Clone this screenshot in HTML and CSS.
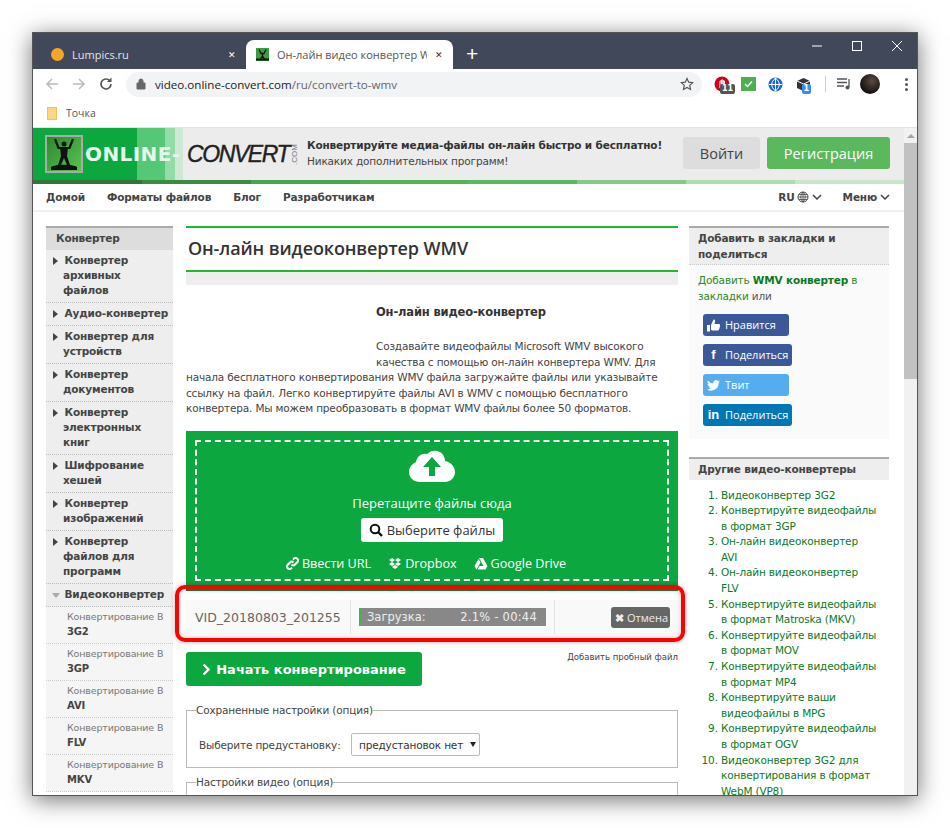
FILE: index.html
```html
<!DOCTYPE html>
<html lang="ru">
<head>
  <meta charset="UTF-8" />
  <title>Он-лайн видеоконвертер WMV</title>
  <link rel="stylesheet" href="styles.css">
</head>
<body>
  <div class="window">
    <div class="tabstrip">
      <div class="tab">
        <span class="dot"></span>
        <span class="tab-title">Lumpics.ru</span>
        <span class="tab-x light">✕</span>
      </div>
      <div class="tab active">
        <span class="favicon">
          <svg width="13" height="13" viewBox="0 0 13 13"><rect width="13" height="13" fill="#3b9e3f"/><path d="M3 1.500l2 4h3l2-4M6.500 5v3M6.500 8l-2 3M6.500 8l2 3" stroke="#111" stroke-width="1.300" fill="none"/><path d="M0 11.500h13" stroke="#111" stroke-width="2"/></svg>
        </span>
        <span class="tab-title">Он-лайн видео конвертер WMV</span>
        <span class="tab-x">✕</span>
      </div>
      <span class="newtab">+</span>
      <div class="winctl">
        <svg width="12" height="12" viewBox="0 0 12 12"><path d="M1 6h10" stroke="#fff" fill="none"/></svg>
        <svg width="12" height="12" viewBox="0 0 12 12"><rect x="1.500" y="1.500" width="9" height="9" stroke="#fff" fill="none"/></svg>
        <svg width="12" height="12" viewBox="0 0 12 12"><path d="M1 1l10 10M11 1L1 11" stroke="#fff" fill="none"/></svg>
      </div>
    </div>

    <div class="toolbar">
      <svg class="navicon" width="16" height="16" viewBox="0 0 16 16"><path d="M14 8H3M8 3L3 8l5 5" stroke="#bbb" stroke-width="1.500" fill="none"/></svg>
      <svg class="navicon" width="16" height="16" viewBox="0 0 16 16"><path d="M2 8h11M8 3l5 5-5 5" stroke="#bbb" stroke-width="1.500" fill="none"/></svg>
      <svg class="navicon" width="16" height="16" viewBox="0 0 16 16"><path d="M13 8a5 5 0 1 1-1.500-3.600" stroke="#555" stroke-width="1.600" fill="none"/><path d="M13.500 1.500v4.500h-4.500z" fill="#555"/></svg>
      <div class="omnibox">
        <svg width="10" height="12" viewBox="0 0 10 12"><path d="M1 5h8v6H1zM3 5V3a2 2 0 0 1 4 0v2" fill="#666" stroke="#666"/></svg>
        <span class="url">video.online-convert.com<span class="url-path">/ru/convert-to-wmv</span></span>
        <svg class="star" width="14" height="14" viewBox="0 0 14 14"><path d="M7 1.500l1.700 3.700 4 .5-3 2.700.8 4L7 10.400l-3.500 2 .8-4-3-2.700 4-.5z" stroke="#555" stroke-width="1.200" fill="none"/></svg>
      </div>
      <div class="extensions">
        <span class="ext">
          <svg width="16" height="16" viewBox="0 0 16 16"><circle cx="8" cy="8" r="7.500" fill="#d0021b"/><path d="M6 12V5h1.500v3M7.500 8V4H9v4M9 8V5h1.500v6" stroke="#fff" fill="none"/></svg>
          <span class="badge gray">11</span>
        </span>
        <span class="ext"><svg width="15" height="14" viewBox="0 0 15 14"><rect width="15" height="14" fill="#4caf50"/><path d="M4 7l2.500 2.500L11 4.500" stroke="#fff" stroke-width="1.500" fill="none"/></svg></span>
        <span class="ext"><svg width="15" height="15" viewBox="0 0 15 15"><circle cx="7.500" cy="7.500" r="7" fill="#1a66c9"/><path d="M7.500 1v13M1 7.500h13M7.500 1c-5 4-5 9 0 13M7.500 1c5 4 5 9 0 13" stroke="#fff" fill="none"/></svg></span>
        <span class="ext">
          <svg width="15" height="15" viewBox="0 0 15 15"><path d="M7.500 1L14 4v7l-6.500 3L1 11V4z" fill="#333"/><path d="M1 4l6.500 3L14 4M7.500 7v7" stroke="#fff" fill="none"/></svg>
          <span class="badge blue">1</span>
        </span>
        <span class="sep"></span>
        <svg class="queue" width="15" height="12" viewBox="0 0 15 12"><path d="M0 1h10M0 4.500h10M0 8h7M12 1v8" stroke="#555" stroke-width="1.300" fill="none"/><circle cx="10.500" cy="9.500" r="2" fill="#555"/></svg>
        <span class="avatar"></span>
        <span class="dots"><i></i><i></i><i></i></span>
      </div>
    </div>

    <div class="bookmarks">
      <span class="folder"></span>
      <span>Точка</span>
    </div>

    <div class="viewport">
      <div class="page">
        <div class="banner">
          <div class="logo">
            <div class="logo-box">
              <svg width="34" height="34" viewBox="0 0 34 34"><circle cx="17" cy="7" r="2.500" fill="#111"/><path d="M8 2l3.500 9h11L26 2" stroke="#111" stroke-width="2.200" fill="none"/><path d="M13 10h8l-1 9 3 9h-3l-3-7-3 7h-3l3-9z" fill="#111"/><path d="M4 30c4-3 22-3 26 0v3H4z" fill="#111"/></svg>
            </div>
            <span class="logo-online">ONLINE-</span>
            <span class="logo-convert">CONVERT</span>
            <span class="logo-com">.COM</span>
          </div>
          <div class="tagline">
            <b>Конвертируйте медиа-файлы он-лайн быстро и бесплатно!</b>
            <span>Никаких дополнительных программ!</span>
          </div>
          <a class="btn-login">Войти</a>
          <a class="btn-register">Регистрация</a>
        </div>
        <div class="stripes"></div>

        <nav class="topnav">
          <a>Домой</a>
          <a>Форматы файлов</a>
          <a>Блог</a>
          <a>Разработчикам</a>
          <span class="spacer"></span>
          <a class="lang">RU
            <svg width="12" height="12" viewBox="0 0 12 12"><circle cx="6" cy="6" r="5" stroke="#444" fill="none"/><path d="M1 6h10M6 1v10M2 3.500h8M2 8.500h8M6 1C3 4 3 8 6 11M6 1c3 3 3 7 0 10" stroke="#444" stroke-width=".8" fill="none"/></svg>
            <svg width="10" height="6" viewBox="0 0 10 6"><path d="M1 1l4 4 4-4" stroke="#444" stroke-width="1.500" fill="none"/></svg>
          </a>
          <a class="menu">Меню
            <svg width="10" height="6" viewBox="0 0 10 6"><path d="M1 1l4 4 4-4" stroke="#444" stroke-width="1.500" fill="none"/></svg>
          </a>
        </nav>

        <div class="columns">
          <aside class="sidebar">
            <div class="side-title">Конвертер</div>
            <ul class="side-list">
              <li>Конвертер архивных файлов</li>
              <li>Аудио-конвертер</li>
              <li>Конвертер для устройств</li>
              <li>Конвертер документов</li>
              <li>Конвертер электронных книг</li>
              <li>Шифрование хешей</li>
              <li>Конвертер изображений</li>
              <li>Конвертер файлов для программ</li>
              <li class="open">Видеоконвертер</li>
            </ul>
            <ul class="side-sub">
              <li>Конвертирование В <b>3G2</b></li>
              <li>Конвертирование В <b>3GP</b></li>
              <li>Конвертирование В <b>AVI</b></li>
              <li>Конвертирование В <b>FLV</b></li>
              <li>Конвертирование В <b>MKV</b></li>
            </ul>
          </aside>

          <main class="content">
            <h1>Он-лайн видеоконвертер WMV</h1>
            <div class="grey-bar"></div>
            <div class="intro">
              <div class="ad-space"></div>
              <h2>Он-лайн видео-конвертер</h2>
              <p>Создавайте видеофайлы Microsoft WMV высокого качества с помощью он-лайн конвертера WMV. Для начала бесплатного конвертирования WMV файла загружайте файлы или указывайте ссылку на файл. Легко конвертируйте файлы AVI в WMV с помощью бесплатного конвертера. Мы можем преобразовать в формат WMV файлы более 50 форматов.</p>
            </div>

            <div class="dropzone">
              <div class="dashed">
                <svg width="46" height="32" viewBox="0 0 46 32"><path d="M11 32C5 32 0 28 0 22c0-5 3-8 7-10C8 6 13 3 18 4 21 1 25 0 28 1c5 1 8 5 8 10 6 1 10 6 10 11 0 6-5 10-10 10z" fill="#fff"/><path d="M23 7l9 10h-6v9h-6v-9h-6z" fill="#0ca73f"/></svg>
                <div class="drop-text">Перетащите файлы сюда</div>
                <a class="choose">
                  <svg width="14" height="14" viewBox="0 0 14 14"><circle cx="6" cy="6" r="4.300" stroke="#111" stroke-width="2" fill="none"/><path d="M9 9l4 4" stroke="#111" stroke-width="2.400"/></svg>
                  Выберите файлы
                </a>
                <div class="sources">
                  <a><svg width="13" height="13" viewBox="0 0 13 13"><path d="M5.500 7.500a2.500 2.500 0 0 0 3.500 0l2.500-2.500A2.500 2.500 0 0 0 8 1.500L7 2.500M7.500 5.500a2.500 2.500 0 0 0-3.500 0L1.500 8A2.500 2.500 0 0 0 5 11.500l1-1" stroke="#fff" stroke-width="2" fill="none"/></svg>Ввести URL</a>
                  <a><svg width="14" height="12" viewBox="0 0 13 12"><path d="M3.500 0L6.500 2 3.500 4 6.500 6 3.500 8 .5 6 3.500 4 .5 2zM9.500 0l3 2-3 2 3 2-3 2-3-2 3-2-3-2zM3.500 9l3-2 3 2-3 2z" fill="#fff"/></svg>Dropbox</a>
                  <a><svg width="14" height="12" viewBox="0 0 13 12"><path d="M4.500 0h4l4.500 8h-4zM4 1l2 3.500L2 11.500 0 8zM3 11.500L5 8h8l-2 3.500z" fill="#fff"/></svg>Google Drive</a>
                </div>
              </div>
            </div>

            <div class="file-row">
              <div class="file-name">VID_20180803_201255</div>
              <div class="file-progress">
                <div class="bar"><span>Загрузка:</span><span class="bar-value">2.1% - 00:44</span></div>
              </div>
              <div class="file-action"><a class="cancel"><b>✖</b> Отмена</a></div>
            </div>

            <div class="actions">
              <a class="start">
                <svg width="9" height="13" viewBox="0 0 9 13"><path d="M1.500 1.500l5 5-5 5" stroke="#fff" stroke-width="2.400" fill="none"/></svg>
                Начать конвертирование
              </a>
              <a class="sample">Добавить пробный файл</a>
            </div>

            <fieldset class="opts">
              <legend>Сохраненные настройки (опция)</legend>
              <div class="preset">
                <label>Выберите предустановку:</label>
                <span class="select">предустановок нет <i></i></span>
              </div>
            </fieldset>
            <fieldset class="opts">
              <legend>Настройки видео (опция)</legend>
            </fieldset>
          </main>

          <aside class="rightbar">
            <div class="box share">
              <div class="box-title">Добавить в закладки и поделиться</div>
              <div class="box-body">
                <p>Добавить <b>WMV конвертер</b> в закладки <span>или</span></p>
                <a class="soc fb short">
                  <svg width="13" height="13" viewBox="0 0 13 13"><path d="M0 6h3v6.500H0zM4 6l2.500-5.500c1.300 0 1.800 1 1.500 2.200L7.500 5H12c1 0 1.200 1 .8 1.600.4.600.3 1.300-.2 1.700.2.700 0 1.300-.6 1.600.1 1-.4 1.600-1.500 1.600H6c-1 0-2-.5-2-1z" fill="#fff"/></svg>
                  Нравится
                </a>
                <a class="soc fb"><span class="glyph">f</span>Поделиться</a>
                <a class="soc tw short">
                  <svg width="13" height="11" viewBox="0 0 24 20"><path d="M24 2.400a10 10 0 0 1-2.800.8A4.900 4.900 0 0 0 23.300.5a9.800 9.800 0 0 1-3.100 1.200 4.900 4.900 0 0 0-8.400 4.500A14 14 0 0 1 1.700.9a4.900 4.900 0 0 0 1.500 6.600 4.900 4.900 0 0 1-2.200-.6c0 2.400 1.700 4.400 3.900 4.900a4.900 4.900 0 0 1-2.200.1 4.900 4.900 0 0 0 4.600 3.400A9.900 9.900 0 0 1 0 17.300 14 14 0 0 0 21.500 4.900 10 10 0 0 0 24 2.400z" fill="#fff"/></svg>
                  Твит
                </a>
                <a class="soc li"><span class="glyph">in</span>Поделиться</a>
              </div>
            </div>
            <div class="box others">
              <div class="box-title">Другие видео-конвертеры</div>
              <ol>
                <li>Видеоконвертер 3G2</li>
                <li>Конвертируйте видеофайлы в формат 3GP</li>
                <li>Он-лайн видеоконвертер AVI</li>
                <li>Он-лайн видеоконвертер FLV</li>
                <li>Конвертируйте видеофайлы в формат Matroska (MKV)</li>
                <li>Конвертируйте видеофайлы в формат MOV</li>
                <li>Конвертируйте видеофайлы в формат MP4</li>
                <li>Конвертируйте ваши видеофайлы в MPG</li>
                <li>Конвертируйте видеофайлы в формат OGV</li>
                <li>Видеоконвертер 3G2 для конвертирования в формат WebM (VP8)</li>
              </ol>
            </div>
          </aside>
        </div>
      </div>

      <div class="scrollbar">
        <span class="scroll-up"></span>
        <span class="thumb"></span>
      </div>
    </div>

    <!-- red frame drawn over the upload row -->
    <div class="highlight"></div>
  </div>
</body>
</html>
```

FILE: styles.css
```css
* {
  box-sizing: border-box;
}
html, body {
  height: 828px;
  overflow: hidden;
}
body {
  margin: 0;
  padding: 32px;
  background-color: #fff;
  font-family: "DejaVu Sans", Verdana, sans-serif;
  font-size: 10.500px;
  letter-spacing: -0.16px;
  color: #444;
}
a {
  text-decoration: none;
}
ul, ol {
  list-style: none;
  margin: 0;
  padding: 0;
}
p {
  margin: 0;
}

.window {
  position: relative;
  width: 886px;
  height: 764px;
  display: flex;
  flex-direction: column;
  background-color: #fff;
  border: 1px solid #555;
  box-shadow: 0 4px 22px rgba(0, 0, 0, 0.55);
  overflow: hidden;
}
.highlight {
  position: absolute;
  left: 142px;
  top: 552px;
  width: 510px;
  height: 57px;
  border: 4px solid #f00;
  border-radius: 10px;
  box-shadow: 0 0 5px rgba(0, 0, 0, 0.3), inset 0 0 5px rgba(0, 0, 0, 0.25);
}

/* browser chrome */
.tabstrip {
  height: 36px;
  flex: none;
  display: flex;
  align-items: flex-end;
  background-color: #414859;
}
.tab {
  width: 213px;
  height: 29px;
  display: flex;
  align-items: center;
  padding: 0 10px 0 18px;
  font-family: "Open Sans", sans-serif;
  font-size: 11px;
  letter-spacing: 0;
  color: #e3e5ea;
}
.tab.active {
  width: 207px;
  padding-left: 10px;
  background-color: #fff;
  border-radius: 8px 8px 0 0;
  color: #555;
}
.tab-title {
  flex: 1;
  margin-left: 8px;
  white-space: nowrap;
  overflow: hidden;
}
.tab-x {
  margin-left: 8px;
  font-size: 9px;
  color: #333;
}
.tab-x.light {
  color: #fff;
}
.dot {
  width: 13px;
  height: 13px;
  border-radius: 50%;
  background-color: #f5a623;
}
.favicon {
  width: 13px;
  height: 13px;
  display: flex;
}
.newtab {
  margin-left: 13px;
  height: 29px;
  font-family: "Liberation Sans", sans-serif;
  font-size: 21px;
  line-height: 27px;
  color: #fff;
}
.winctl {
  margin-left: auto;
  align-self: flex-start;
  display: flex;
  gap: 28px;
  padding: 7px 14px 0 0;
}

.toolbar {
  height: 30px;
  flex: none;
  display: flex;
  align-items: center;
  padding-left: 11px;
}
.navicon {
  margin-right: 11px;
}
.navicon:nth-child(3) {
  margin-right: 12px;
}
.omnibox {
  width: 576px;
  height: 25px;
  flex: none;
  display: flex;
  align-items: center;
  padding: 0 8px 0 10px;
  background-color: #f1f3f4;
  border-radius: 13px;
}
.url {
  margin-left: 9px;
  font-family: "Open Sans", sans-serif;
  font-size: 11.600px;
  letter-spacing: 0;
  color: #222;
}
.url-path {
  color: #666;
}
.star {
  margin-left: auto;
}
.extensions {
  display: flex;
  align-items: center;
  margin-left: 12px;
}
.ext {
  position: relative;
  width: 27.200px;
  height: 18px;
  display: flex;
  align-items: center;
}
.badge {
  position: absolute;
  left: 6px;
  top: 9px;
  padding: 0 2px;
  border-radius: 2px;
  font-size: 8px;
  font-weight: bold;
  line-height: 10px;
  color: #fff;
}
.badge.gray {
  background-color: #555;
}
.badge.blue {
  background-color: #3b8cf0;
}
.sep {
  width: 1px;
  height: 16px;
  margin: 0 11px 0 2px;
  background-color: #ccc;
}
.queue {
  margin-right: 8px;
}
.avatar {
  width: 20px;
  height: 20px;
  border-radius: 50%;
  background: radial-gradient(circle at 60% 35%, #5c4a42, #15100e 70%);
}
.dots {
  display: flex;
  flex-direction: column;
  gap: 2px;
  margin-left: 25px;
}
.dots i {
  width: 3px;
  height: 3px;
  border-radius: 50%;
  background-color: #555;
}

.bookmarks {
  height: 29px;
  flex: none;
  display: flex;
  align-items: center;
  gap: 9px;
  padding-left: 14px;
  font-family: "Open Sans", sans-serif;
  font-size: 10.500px;
  letter-spacing: 0;
  color: #555;
  border-bottom: 1px solid #e4e4e4;
}
.folder {
  width: 10px;
  height: 13px;
  background-color: #fcd77e;
  border: 1px solid #f0c25c;
}

.viewport {
  flex: 1;
  min-height: 0;
  display: flex;
}
.page {
  flex: 1;
  min-width: 0;
  overflow: hidden;
}
.scrollbar {
  width: 13px;
  flex: none;
  padding-top: 6px;
  background-color: #f1f1f1;
}
.scroll-up {
  display: block;
  width: 0;
  margin: 0 auto 5px;
  border-left: 4px solid transparent;
  border-right: 4px solid transparent;
  border-bottom: 4px solid #a3a3a3;
}
.thumb {
  display: block;
  height: 236px;
  background-color: #c1c1c1;
}

/* site header */
.banner {
  height: 52px;
  display: flex;
  align-items: center;
  padding: 0 14px 2px 0;
  background-color: #ececec;
}
.logo {
  width: 267px;
  height: 52px;
  flex: none;
  align-self: flex-start;
  display: flex;
  align-items: center;
  padding-left: 12px;
  background: linear-gradient(90deg, #0ca73f 104px, #55c878 104px, #55c878 132px, #93dba8 132px, #93dba8 142px, #cfe8d6 142px, #cfe8d6 150px, #ececec 150px);
}
.logo-box {
  width: 38px;
  height: 38px;
  flex: none;
  display: flex;
  background: linear-gradient(135deg, #2a8a2a, #5cc254);
  border: 2px solid #aaa;
}
.logo-online {
  width: 102px;
  margin-left: 2px;
  font-size: 20px;
  font-weight: bold;
  letter-spacing: 0.4px;
  white-space: nowrap;
  color: #e5f7ea;
}
.logo-convert {
  width: 103px;
  font-family: "Liberation Sans", sans-serif;
  font-size: 23px;
  font-style: italic;
  letter-spacing: -1.400px;
  -webkit-text-stroke: 0.4px #222;
  color: #222;
}
.logo-com {
  width: 8px;
  font-family: "Liberation Sans", sans-serif;
  font-size: 8px;
  letter-spacing: 0;
  color: #777;
  writing-mode: vertical-rl;
  transform: rotate(180deg);
}
.tagline {
  display: flex;
  flex-direction: column;
  gap: 3px;
  margin-left: 7px;
  line-height: 13px;
  white-space: nowrap;
  color: #444;
}
.tagline b {
  color: #333;
}
.btn-login, .btn-register {
  height: 32px;
  flex: none;
  display: flex;
  align-items: center;
  justify-content: center;
  border-radius: 3px;
  font-family: "Open Sans", sans-serif;
  font-size: 14.500px;
  letter-spacing: 0;
}
.btn-login {
  width: 77px;
  margin-left: auto;
  background-color: #ddd;
  color: #444;
}
.btn-register {
  width: 123px;
  margin-left: 7px;
  background-color: #5cb85c;
  color: #fff;
}
.stripes {
  height: 4px;
  background: linear-gradient(90deg, #35733b 12.500%, #3d8a42 12.500%, #3d8a42 25%, #47a54c 25%, #47a54c 37.500%, #52b456 37.500%, #52b456 50%, #5cb860 50%, #5cb860 62.500%, #85c888 62.500%, #85c888 75%, #aedcb0 75%, #aedcb0 87.500%, #c9e6cb 87.500%);
}
.topnav {
  height: 28px;
  display: flex;
  align-items: center;
  gap: 21px;
  padding: 0 14px 0 13px;
  border-bottom: 2px solid #f0f0f0;
  font-weight: bold;
  color: #444;
}
.topnav a:nth-child(-n+3) {
  margin-right: 1px;
}
.spacer {
  flex: 1;
}
.lang, .menu {
  display: flex;
  align-items: center;
  gap: 3px;
}
.lang {
  gap: 2.500px;
}

.columns {
  display: flex;
  align-items: flex-start;
  padding: 14px 0 0 13px;
}

/* left menu */
.sidebar {
  width: 127px;
  flex: none;
  background-color: #eee;
  line-height: 15px;
}
.side-title {
  height: 24px;
  padding: 3px 0 0 10px;
  background-color: #ddd;
  border-top: 2px solid #aaa;
  font-weight: bold;
}
.side-list li {
  position: relative;
  padding: 3px 4px 4px 17px;
  border-bottom: 1px dotted #bbb;
  font-weight: bold;
  text-indent: 1.500px;
}
.side-list li::before {
  content: "";
  position: absolute;
  left: 7px;
  top: 7px;
  border-left: 5px solid #444;
  border-top: 4px solid transparent;
  border-bottom: 4px solid transparent;
}
.side-list li.open::before {
  left: 6px;
  top: 9px;
  border-top: 5px solid #aaa;
  border-bottom: 0;
  border-left: 4px solid transparent;
  border-right: 4px solid transparent;
}
.side-sub li {
  padding: 2px 2px 4px 21px;
  border-bottom: 1px dotted #ccc;
  font-size: 9.500px;
  color: #777;
  background-color: #f5f5f5;
}
.side-sub b {
  display: block;
  font-size: 10px;
  color: #444;
}

/* middle column */
.content {
  width: 492px;
  flex: none;
  margin-left: 13px;
}
h1 {
  height: 46px;
  margin: 0;
  padding-left: 2px;
  border-top: 2px solid #1dbb2b;
  border-bottom: 2px solid #1dbb2b;
  font-family: "Open Sans", sans-serif;
  font-size: 18px;
  font-weight: 600;
  letter-spacing: -0.1px;
  line-height: 40px;
  color: #333;
}
.grey-bar {
  height: 13px;
  background-color: #eee;
}
.intro {
  height: 146px;
  padding-top: 19px;
  line-height: 15.600px;
  color: #444;
}
.ad-space {
  float: left;
  width: 190px;
  height: 62px;
}
h2 {
  margin: 0 0 19px;
  font-size: 11.500px;
  font-weight: bold;
  line-height: 16px;
  color: #333;
}
.dropzone {
  height: 160px;
  padding: 9px;
  background-color: #0ca73f;
  border-bottom: 2px solid #0a8a35;
}
.dashed {
  height: 141px;
  display: flex;
  flex-direction: column;
  align-items: center;
  padding-top: 8px;
  border: 2px dashed #fff;
  color: #fff;
  font-family: "Open Sans", sans-serif;
  font-size: 13px;
  letter-spacing: 0;
}
.drop-text {
  margin-top: 12px;
  line-height: 18px;
}
.choose {
  height: 24px;
  display: flex;
  align-items: center;
  gap: 4px;
  margin-top: 6px;
  padding: 0 8px;
  background-color: #fff;
  border-radius: 3px;
  color: #333;
}
.sources {
  display: flex;
  gap: 17px;
  margin: 13px 12px 0 0;
  font-size: 12.600px;
}
.sources a {
  display: flex;
  align-items: center;
  gap: 3px;
  color: #fff;
}
.file-row {
  height: 34px;
  display: flex;
  align-items: center;
  margin-top: 9px;
  background-color: #f9f9f9;
}
.file-name {
  width: 164px;
  padding-left: 9px;
  font-size: 12.500px;
  letter-spacing: 0;
  color: #666;
  white-space: nowrap;
}
.file-progress {
  width: 205px;
  height: 34px;
  display: flex;
  align-items: center;
  padding: 0 8px;
  border-left: 1px solid #e4e4e4;
  border-right: 1px solid #e4e4e4;
}
.bar {
  flex: 1;
  height: 18px;
  display: flex;
  justify-content: space-between;
  align-items: center;
  padding: 0 9px 0 6px;
  background-color: #888;
  border-left: 2px solid #4caf50;
  font-size: 11.500px;
  letter-spacing: 0;
  color: #eee;
}
.bar-value {
  letter-spacing: 0.25px;
}
.file-action {
  flex: 1;
  display: flex;
  justify-content: flex-end;
  padding-right: 8px;
}
.cancel {
  height: 21px;
  display: flex;
  align-items: center;
  gap: 3px;
  padding: 0 2px 0 4px;
  background-color: #666;
  border-radius: 3px;
  font-family: "Open Sans", sans-serif;
  font-size: 11px;
  letter-spacing: 0;
  color: #eee;
}
.actions {
  display: flex;
  justify-content: space-between;
  margin-top: 18px;
}
.start {
  width: 236px;
  height: 34px;
  display: flex;
  align-items: center;
  justify-content: center;
  gap: 5px;
  background-color: #0ca73f;
  border-radius: 3px;
  font-size: 13px;
  font-weight: bold;
  letter-spacing: 0;
  color: #fff;
}
.sample {
  font-size: 8.500px;
  letter-spacing: 0;
  line-height: 10px;
  color: #444;
}
.opts {
  margin: 18px 0 0;
  padding: 17px 12px 11px;
  border: 1px solid #bbb;
  min-width: 0;
}
.opts + .opts {
  margin-top: 8px;
  height: 60px;
}
legend {
  padding: 0;
  margin-left: -3px;
  line-height: 12px;
  color: #444;
}
.preset {
  display: flex;
  align-items: center;
}
.preset label {
  width: 152px;
  flex: none;
}
.select {
  width: 129px;
  height: 23px;
  flex: none;
  display: flex;
  align-items: center;
  justify-content: space-between;
  padding: 0 3px 0 7px;
  background-color: #fff;
  border: 1px solid #bbb;
  border-radius: 2px;
  white-space: nowrap;
  color: #333;
}
.select i {
  border-top: 5px solid #222;
  border-left: 3px solid transparent;
  border-right: 3px solid transparent;
}

/* right column */
.rightbar {
  width: 200px;
  flex: none;
  margin-left: 11px;
}
.box-title {
  padding: 3px 10px 2px 9px;
  background-color: #eee;
  border-top: 2px solid #aaa;
  font-weight: bold;
  line-height: 15.500px;
  color: #444;
}
.share {
  height: 213px;
  background-color: #fafafa;
}
.share .box-title {
  border-bottom: 1px dotted #ccc;
}
.box-body {
  padding: 8px 9px 0;
  line-height: 15.500px;
  color: #2a8a2a;
}
.box-body b {
  color: #0a7a1f;
}
.box-body span:not(.glyph) {
  color: #555;
}
.soc {
  width: 89px;
  height: 22px;
  display: flex;
  align-items: center;
  gap: 5px;
  margin: 0 0 8px 5px;
  padding-left: 4px;
  border-radius: 3px;
  font-family: "Open Sans", sans-serif;
  font-size: 11px;
  letter-spacing: 0;
  color: #fff;
}
.box-body p {
  margin-bottom: 10px;
}
.soc.short {
  width: 86px;
}
.soc.fb {
  background-color: #3b5998;
}
.soc.tw {
  background-color: #55acee;
}
.soc.li {
  background-color: #0077b5;
}
.glyph {
  width: 13px;
  text-align: center;
  font-family: "Liberation Sans", sans-serif;
  font-size: 13px;
  font-weight: bold;
}
.others {
  margin-top: 18px;
}
.others ol {
  list-style: decimal;
  margin-top: 8px;
  padding: 0 12px 0 32px;
  line-height: 15.600px;
  color: #0a7a1f;
}
```
